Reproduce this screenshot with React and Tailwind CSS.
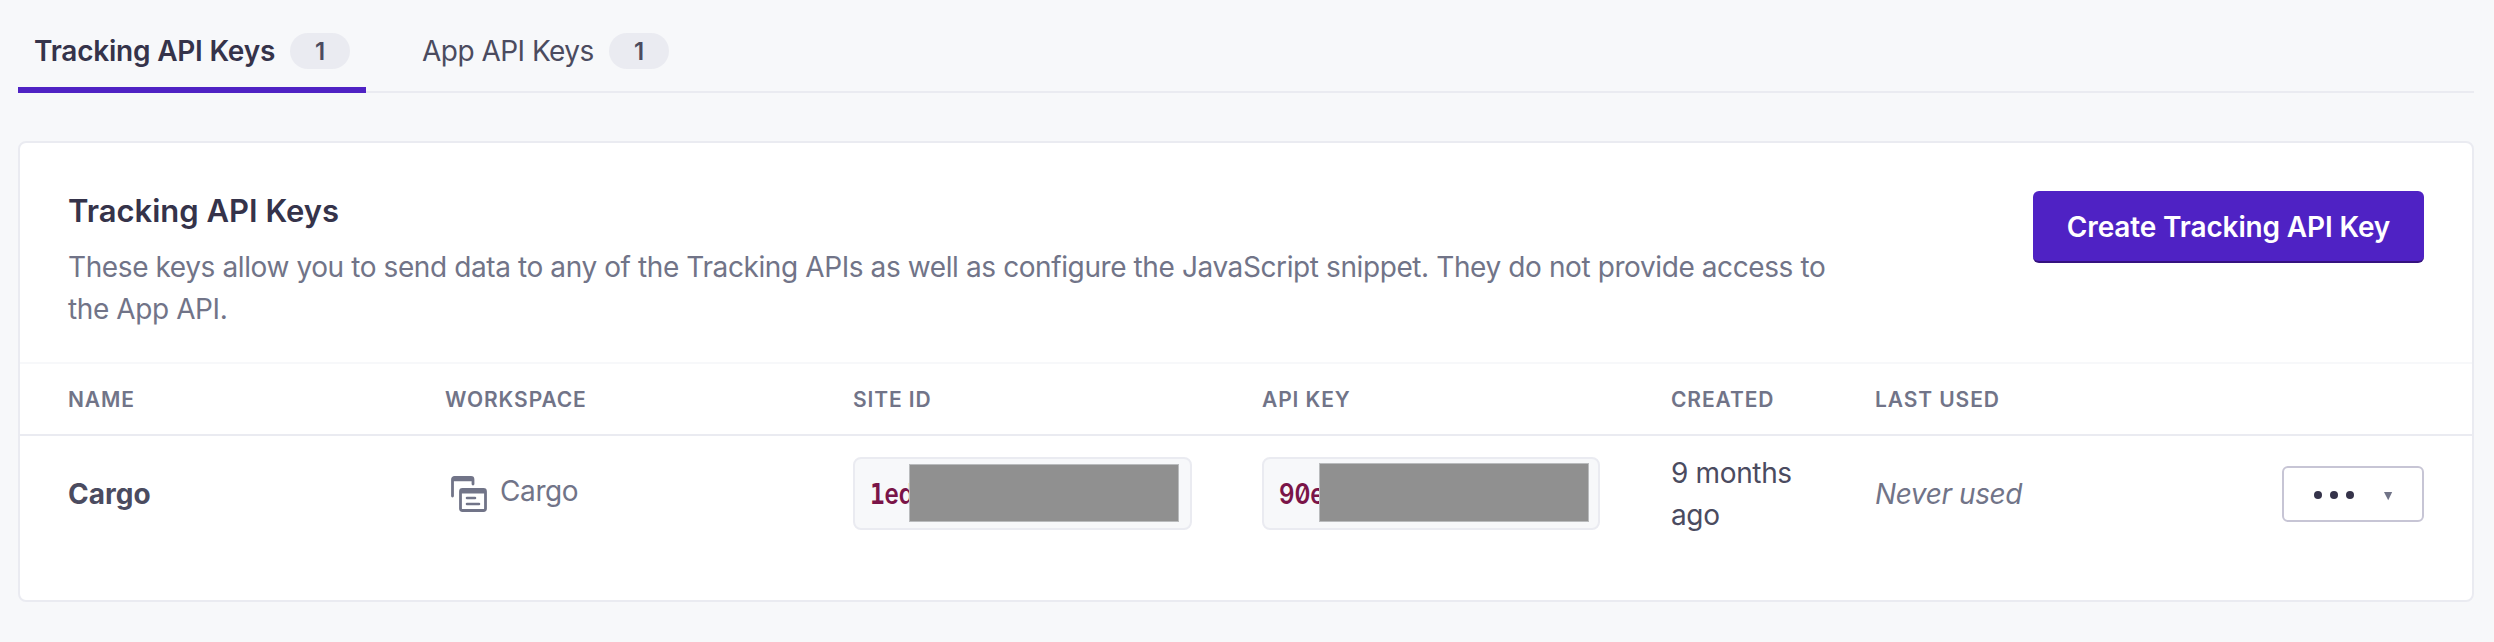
const COLS = "grid grid-cols-[377px_408px_409px_409px_204px_1fr] pl-12 pr-12";

function Badge({ children }) {
  return (
    <span className="flex h-9 w-[60px] items-center justify-center rounded-[18px] bg-[#eaebf1] pt-px text-[24px] font-semibold text-[#4b4b5f]">
      {children}
    </span>
  );
}

function Secret({ children, className, maskClass }) {
  return (
    <div className={`relative mt-[21px] h-[73px] rounded-lg border-2 border-[#eaebf1] bg-[#f7f8fa] pl-[15px] ${className}`}>
      <code className="inline-block origin-left scale-x-[0.86] text-[28px] leading-[71px] font-semibold text-[#7a1448] [font-family:Inter,sans-serif] [font-feature-settings:'zero']">
        {children}
      </code>
      <span className={`absolute border border-[#b9bbbd] bg-[#909090] ${maskClass}`} />
    </div>
  );
}

function WorkspaceIcon() {
  return (
    <svg width="36" height="36" viewBox="0 0 36 36" fill="none">
      <path d="M1.500 20V3.500a2 2 0 0 1 2-2H20a2 2 0 0 1 2 2V8" stroke="#717488" strokeWidth="2.800" strokeLinecap="round" />
      <path d="M1.500 3.500H22" stroke="#717488" strokeWidth="3.500" />
      <rect x="9.500" y="13.500" width="25" height="21" rx="2" stroke="#717488" strokeWidth="2.800" />
      <path d="M9.500 15.500h25" stroke="#717488" strokeWidth="4" />
      <path d="M16 22h8M16 28h12" stroke="#717488" strokeWidth="2.600" strokeLinecap="round" />
    </svg>
  );
}

export default function App() {
  return (
    <div className="h-[642px] w-[2494px] bg-[#f7f8fa] pr-5 pl-[18px] text-[28px] leading-[42px] text-[#4b4b5f] [font-family:Inter,sans-serif]">
      <nav className="flex h-[93px] border-b-2 border-[#eaebf1]">
        <div className="flex h-[93px] w-[348px] shrink-0 items-start justify-between border-b-[6px] border-[#4f22c4] pt-[30px] pr-4 pl-4">
          <span className="font-semibold tracking-[-0.22px] whitespace-nowrap text-[#35334a]">Tracking API Keys</span>
          <div className="pt-[3px]"><Badge>1</Badge></div>
        </div>
        <div className="ml-14 flex w-[247px] items-start justify-between pt-[30px]">
          <span className="tracking-[-0.52px] whitespace-nowrap">App API Keys</span>
          <div className="pt-[3px]"><Badge>1</Badge></div>
        </div>
      </nav>

      <section className="mt-12 h-[461px] rounded-lg border-2 border-[#eaebf1] bg-white">
        <header className="flex h-[221px] items-start justify-between border-b-2 border-[#f7f8fa] pt-12 pr-12 pl-12">
          <div className="w-[1780px]">
            <h2 className="-mt-px text-[31px] leading-[42px] font-semibold text-[#35334a]">Tracking API Keys</h2>
            <p className="mt-[14px] tracking-[-0.4px] text-[#717488]">
              These keys allow you to send data to any of the Tracking APIs as well as configure the JavaScript snippet. They do not provide access to the App API.
            </p>
          </div>
          <button className="h-[72px] w-[391px] rounded-md border-b-2 border-[#35127f] bg-[#4f22c4] pt-0.5 font-semibold tracking-[-0.15px] whitespace-nowrap text-white">
            Create Tracking API Key
          </button>
        </header>

        <div className={`${COLS} h-[72px] items-center border-b-2 border-[#eaebf1] pt-0.5 text-[21px] font-semibold tracking-[0.9px] text-[#717488]`}>
          <div>NAME</div>
          <div>WORKSPACE</div>
          <div>SITE ID</div>
          <div>API KEY</div>
          <div>CREATED</div>
          <div>LAST USED</div>
        </div>

        <div className={`${COLS} items-start`}>
          <div className="mt-[37px] font-bold">Cargo</div>
          <div className="mt-[34px] flex pl-1.5 text-[#717488]">
            <div className="mt-1.5"><WorkspaceIcon /></div>
            <span className="ml-[13px] tracking-[-0.4px]">Cargo</span>
          </div>
          <Secret className="w-[339px]" maskClass="top-[5px] left-[54px] h-[58px] w-[270px]">
            <span className="font-bold [font-family:'DejaVu_Sans_Mono',monospace]">1</span>ed
          </Secret>
          <Secret className="w-[338px]" maskClass="top-1 left-[55px] h-[59px] w-[270px]">90e</Secret>
          <div className="mt-4 w-[130px] tracking-[-0.35px]">9 months ago</div>
          <div className="flex items-start justify-between">
            <span className="mt-[37px] tracking-[-0.4px] text-[#717488] italic">Never used</span>
            <button className="mt-[30px] flex h-14 w-[142px] items-center rounded-md border-2 border-[#c7c5d5] bg-white pl-[30px]">
              <svg width="80" height="10" viewBox="0 0 80 10" className="mt-1">
                <g fill="#35334a">
                  <circle cx="4" cy="4" r="4" />
                  <circle cx="20" cy="4" r="4" />
                  <circle cx="36" cy="4" r="4" />
                </g>
                <path d="M70 1h8.200l-4 8.200z" fill="#717488" />
              </svg>
            </button>
          </div>
        </div>
      </section>
    </div>
  );
}
